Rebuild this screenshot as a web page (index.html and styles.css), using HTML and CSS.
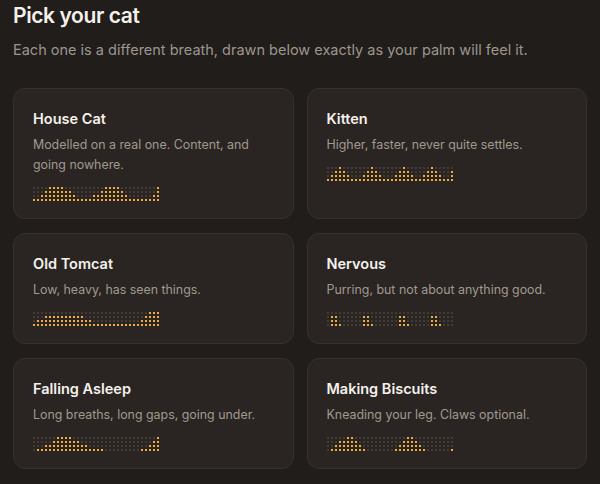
FILE: index.html
```html
<!DOCTYPE html>
<html lang="en">
<head>
<meta charset="utf-8">
<title>Pick your cat</title>
<link rel="stylesheet" href="styles.css">
</head>
<body>
<main class="page">
  <h1 class="title">Pick your cat</h1>
  <p class="lead">Each one is a different breath, drawn below exactly as your palm will feel it.</p>
  <div class="grid">
    <section class="card">
      <h2 class="card-title">House Cat</h2>
      <p class="card-desc">Modelled on a real one. Content, and going nowhere.</p>
      <div class="wave" data-h="1,1,2,3,4,4,4,4,3,3,2,1,1,1,1,2,2,3,4,4,4,4,3,2,1,1,1,1,1,1,2,4"></div>
    </section>
    <section class="card">
      <h2 class="card-title">Kitten</h2>
      <p class="card-desc">Higher, faster, never quite settles.</p>
      <div class="wave" data-h="1,2,3,4,3,2,1,1,1,2,3,4,3,2,1,1,1,2,3,4,3,2,1,1,2,3,4,3,2,1,1,3"></div>
    </section>
    <section class="card">
      <h2 class="card-title">Old Tomcat</h2>
      <p class="card-desc">Low, heavy, has seen things.</p>
      <div class="wave" data-h="1,2,2,3,3,3,3,3,3,3,3,3,3,2,2,1,1,1,1,1,1,1,1,1,1,1,1,2,3,4,4,4"></div>
    </section>
    <section class="card">
      <h2 class="card-title">Nervous</h2>
      <p class="card-desc">Purring, but not about anything good.</p>
      <div class="wave" data-h="0,3,3,1,0,0,0,0,0,3,3,1,0,0,0,0,0,0,3,3,1,0,0,0,0,0,3,3,1,0,0,0"></div>
    </section>
    <section class="card">
      <h2 class="card-title">Falling Asleep</h2>
      <p class="card-desc">Long breaths, long gaps, going under.</p>
      <div class="wave" data-h="0,1,1,2,2,3,4,4,4,4,3,3,2,2,1,1,1,1,0,0,0,0,0,0,0,0,0,1,1,2,3,4"></div>
    </section>
    <section class="card">
      <h2 class="card-title">Making Biscuits</h2>
      <p class="card-desc">Kneading your leg. Claws optional.</p>
      <div class="wave" data-h="0,1,2,3,3,4,4,3,2,1,0,0,0,0,0,0,0,1,2,3,4,4,3,2,1,0,0,0,0,0,0,1"></div>
    </section>
  </div>
</main>
<script src="script.js"></script>
</body>
</html>
```

FILE: styles.css
```css
html, body {
  margin: 0;
  padding: 0;
  background: #211d1a;
}
body {
  font-family: Inter, "Noto Sans", "Liberation Sans", sans-serif;
  color: #f2eee9;
}
.page {
  padding: 2px 13px 13px;
}
.title {
  margin: 0;
  font-size: 21px;
  line-height: 28px;
  font-weight: 600;
  letter-spacing: -0.4px;
  color: #f4f1ec;
}
.lead {
  margin: 10px 0 0;
  font-size: 14.5px;
  line-height: 20px;
  color: #9c958e;
}
.grid {
  margin-top: 28px;
  display: grid;
  grid-template-columns: 1fr 1fr;
  gap: 14px 13px;
}
.card {
  background: #2a2522;
  border: 1px solid #37312c;
  border-radius: 12px;
  padding: 20px 19px 17px;
}
.card-title {
  margin: 0;
  font-size: 14.5px;
  line-height: 20px;
  font-weight: 600;
  color: #f4f1ec;
}
.card-desc {
  margin: 6px 0 0;
  font-size: 12.4px;
  line-height: 20px;
  color: #a0998f;
}
.wave {
  margin-top: 12px;
  display: flex;
  gap: 2px;
  height: 14px;
}
.col {
  display: flex;
  flex-direction: column;
  gap: 2px;
}
.dot {
  width: 2px;
  height: 2px;
  background: #423c37;
}
.dot.on {
  background: #eeac40;
}
```

FILE: script.js
```js
document.querySelectorAll('.wave').forEach(function (wave) {
  var heights = wave.getAttribute('data-h').split(',').map(Number);
  heights.forEach(function (h) {
    var col = document.createElement('div');
    col.className = 'col';
    for (var r = 0; r < 4; r++) {
      var dot = document.createElement('span');
      dot.className = 'dot' + (4 - r <= h ? ' on' : '');
      col.appendChild(dot);
    }
    wave.appendChild(col);
  });
});
```
